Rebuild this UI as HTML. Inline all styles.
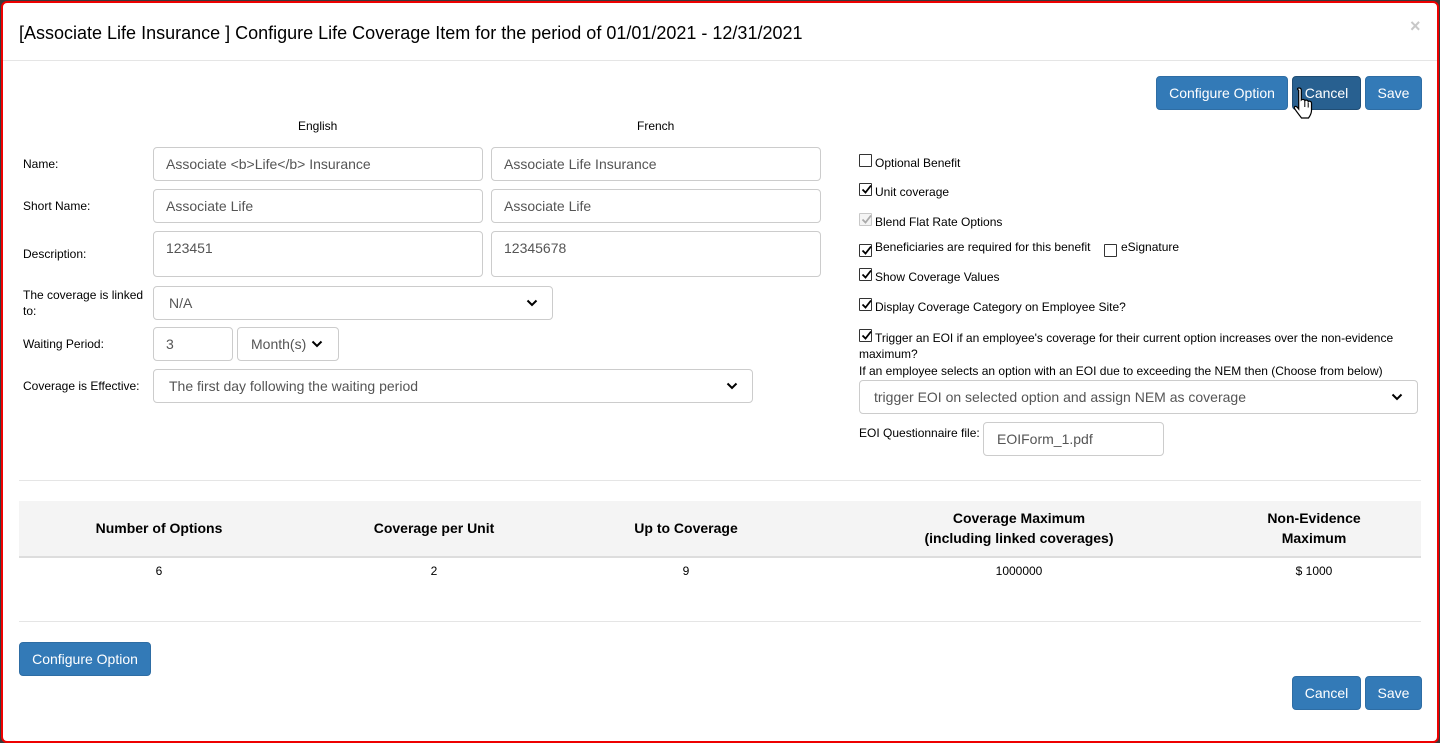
<!DOCTYPE html>
<html><head><meta charset="utf-8"><style>
*{box-sizing:border-box;margin:0;padding:0}
body{width:1440px;height:743px;background:#3a3a3a;font-family:"Liberation Sans",Arial,sans-serif;color:#000;position:relative;overflow:hidden}
.modal{position:absolute;left:1px;top:1px;width:1438px;height:742px;background:#fff;border:2px solid #e00;border-radius:6px}
.a{position:absolute}
.t{position:absolute;font-size:12px;white-space:nowrap}
.in{position:absolute;border:1px solid #ccc;border-radius:4px;font-size:14px;color:#555;padding:0 12px;display:flex;align-items:center;background:#fff}
.btn{position:absolute;background:#337ab7;border:1px solid #2e6da4;border-radius:4px;color:#fff;font-size:14px;display:flex;align-items:center;justify-content:center}
.cb{position:absolute;width:13px;height:13px;border:1px solid #333;background:#fff;border-radius:1px}
.cb svg{position:absolute;left:1px;top:0}
.chev{position:absolute;right:14px;top:50%;margin-top:-4px}
.hr{position:absolute;left:19px;width:1402px;height:1px;background:#e5e5e5}
.th{position:absolute;font-size:14px;font-weight:bold;text-align:center;line-height:20px}
.td{position:absolute;font-size:12px;text-align:center}
</style></head><body>
<div class="modal"></div>
<div class="t" style="left:19px;top:23px;font-size:18px">[Associate Life Insurance ] Configure Life Coverage Item for the period of 01/01/2021 - 12/31/2021</div>
<div class="t" style="left:1410px;top:16px;font-size:18px;font-weight:bold;color:#c8c8c8">×</div>
<div class="a" style="left:3px;top:60px;width:1434px;height:1px;background:#e5e5e5"></div>

<div class="btn" style="left:1156px;top:76px;width:132px;height:34px">Configure Option</div>
<div class="btn" style="left:1292px;top:76px;width:69px;height:34px;background:#286090;border-color:#204d74">Cancel</div>
<div class="btn" style="left:1365px;top:76px;width:57px;height:34px">Save</div>
<svg class="a" style="left:1293px;top:86px" width="24" height="36" viewBox="0 0 24 36"><path d="M6 2c1.5 0 2.3 1 2.3 2.3V14c.8-.8 3-.9 3.5.6.8-.8 3-.7 3.4.9.9-.7 3.2-.4 3.3 1.5v7.5c0 3.5-2 6-3 7.5H8.5C7 30 3 25 1.6 22.6c-.8-1.4.3-2.7 1.7-2 .9.4 1.8 1.6 2.4 2.4V4.3C3.7 3 4.5 2 6 2z" fill="#fff" stroke="#000" stroke-width="1.2"/><path d="M11.8 15v6M15.2 16.5v5M18.5 18v4" stroke="#000" stroke-width="1"/></svg>

<div class="t" style="left:298px;top:119px">English</div>
<div class="t" style="left:637px;top:119px">French</div>

<div class="t" style="left:23px;top:157px">Name:</div>
<div class="in" style="left:153px;top:147px;width:330px;height:34px">Associate &lt;b&gt;Life&lt;/b&gt; Insurance</div>
<div class="in" style="left:491px;top:147px;width:330px;height:34px">Associate Life Insurance</div>
<div class="t" style="left:23px;top:199px">Short Name:</div>
<div class="in" style="left:153px;top:189px;width:330px;height:34px">Associate Life</div>
<div class="in" style="left:491px;top:189px;width:330px;height:34px">Associate Life</div>
<div class="t" style="left:23px;top:247px">Description:</div>
<div class="in" style="left:153px;top:231px;width:330px;height:46px;align-items:flex-start;padding-top:8px">123451</div>
<div class="in" style="left:491px;top:231px;width:330px;height:46px;align-items:flex-start;padding-top:8px">12345678</div>
<div class="t" style="left:23px;top:287px;line-height:16px">The coverage is linked<br>to:</div>
<div class="in" style="left:153px;top:286px;width:400px;height:34px;padding-left:15px">N/A<svg class="chev" width="12" height="8" viewBox="0 0 12 8"><path d="M1.5 1.5l4.5 4.5 4.5-4.5" fill="none" stroke="#000" stroke-width="2"/></svg></div>
<div class="t" style="left:23px;top:337px">Waiting Period:</div>
<div class="in" style="left:153px;top:327px;width:80px;height:34px">3</div>
<div class="in" style="left:237px;top:327px;width:102px;height:34px;padding-left:13px">Month(s)<svg style="margin-left:5px" width="12" height="8" viewBox="0 0 12 8"><path d="M1.5 1.5l4.5 4.5 4.5-4.5" fill="none" stroke="#000" stroke-width="2"/></svg></div>
<div class="t" style="left:23px;top:379px">Coverage is Effective:</div>
<div class="in" style="left:153px;top:369px;width:600px;height:34px;padding-left:15px">The first day following the waiting period<svg class="chev" width="12" height="8" viewBox="0 0 12 8"><path d="M1.5 1.5l4.5 4.5 4.5-4.5" fill="none" stroke="#000" stroke-width="2"/></svg></div>

<div class="cb" style="left:859px;top:154px"></div><div class="t" style="left:875px;top:156px">Optional Benefit</div>
<div class="cb" style="left:859px;top:183px"><svg width="11" height="11" viewBox="0 0 11 11"><path d="M1.5 5.5l3 3 5.5-7" fill="none" stroke="#000" stroke-width="1.8"/></svg></div><div class="t" style="left:875px;top:185px">Unit coverage</div>
<div class="cb" style="left:859px;top:213px;border-color:#c8c8c8;background:#f4f4f4"><svg width="11" height="11" viewBox="0 0 11 11"><path d="M1.5 5.5l3 3 5.5-7" fill="none" stroke="#aaa" stroke-width="1.8"/></svg></div><div class="t" style="left:875px;top:215px">Blend Flat Rate Options</div>
<div class="cb" style="left:859px;top:244px"><svg width="11" height="11" viewBox="0 0 11 11"><path d="M1.5 5.5l3 3 5.5-7" fill="none" stroke="#000" stroke-width="1.8"/></svg></div><div class="t" style="left:875px;top:240px">Beneficiaries are required for this benefit</div>
<div class="cb" style="left:1104px;top:244px"></div><div class="t" style="left:1121px;top:240px">eSignature</div>
<div class="cb" style="left:859px;top:268px"><svg width="11" height="11" viewBox="0 0 11 11"><path d="M1.5 5.5l3 3 5.5-7" fill="none" stroke="#000" stroke-width="1.8"/></svg></div><div class="t" style="left:875px;top:270px">Show Coverage Values</div>
<div class="cb" style="left:859px;top:298px"><svg width="11" height="11" viewBox="0 0 11 11"><path d="M1.5 5.5l3 3 5.5-7" fill="none" stroke="#000" stroke-width="1.8"/></svg></div><div class="t" style="left:875px;top:300px">Display Coverage Category on Employee Site?</div>
<div class="cb" style="left:859px;top:329px"><svg width="11" height="11" viewBox="0 0 11 11"><path d="M1.5 5.5l3 3 5.5-7" fill="none" stroke="#000" stroke-width="1.8"/></svg></div><div class="t" style="left:875px;top:331px">Trigger an EOI if an employee's coverage for their current option increases over the non-evidence</div>
<div class="t" style="left:859px;top:347px">maximum?</div>
<div class="t" style="left:859px;top:364px">If an employee selects an option with an EOI due to exceeding the NEM then (Choose from below)</div>
<div class="in" style="left:859px;top:380px;width:559px;height:34px;padding-left:14px">trigger EOI on selected option and assign NEM as coverage<svg class="chev" width="12" height="8" viewBox="0 0 12 8"><path d="M1.5 1.5l4.5 4.5 4.5-4.5" fill="none" stroke="#000" stroke-width="2"/></svg></div>
<div class="t" style="left:859px;top:426px">EOI Questionnaire file:</div>
<div class="in" style="left:983px;top:422px;width:181px;height:34px;padding-left:13px">EOIForm_1.pdf</div>

<div class="hr" style="top:480px"></div>
<div class="a" style="left:19px;top:501px;width:1402px;height:55px;background:#f4f4f4"></div>
<div class="a" style="left:19px;top:556px;width:1402px;height:2px;background:#ddd"></div>
<div class="th" style="left:59px;width:200px;top:518px">Number of Options</div>
<div class="th" style="left:334px;width:200px;top:518px">Coverage per Unit</div>
<div class="th" style="left:586px;width:200px;top:518px">Up to Coverage</div>
<div class="th" style="left:869px;width:300px;top:508px">Coverage Maximum<br>(including linked coverages)</div>
<div class="th" style="left:1214px;width:200px;top:508px">Non-Evidence<br>Maximum</div>
<div class="td" style="left:59px;width:200px;top:564px">6</div>
<div class="td" style="left:334px;width:200px;top:564px">2</div>
<div class="td" style="left:586px;width:200px;top:564px">9</div>
<div class="td" style="left:919px;width:200px;top:564px">1000000</div>
<div class="td" style="left:1214px;width:200px;top:564px">$ 1000</div>
<div class="hr" style="top:621px"></div>

<div class="btn" style="left:19px;top:642px;width:132px;height:34px">Configure Option</div>
<div class="btn" style="left:1292px;top:676px;width:69px;height:34px">Cancel</div>
<div class="btn" style="left:1365px;top:676px;width:57px;height:34px">Save</div>
</body></html>
